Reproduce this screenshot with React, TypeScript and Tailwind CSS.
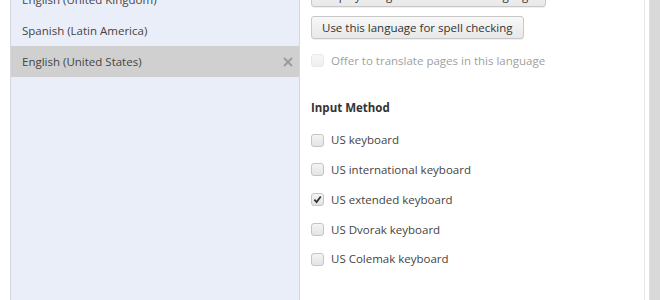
const LANGUAGES = [
  { name: "English (United Kingdom)", selected: false },
  { name: "Spanish (Latin America)", selected: false },
  { name: "English (United States)", selected: true },
];

const INPUT_METHODS = [
  { label: "US keyboard", checked: false },
  { label: "US international keyboard", checked: false },
  { label: "US extended keyboard", checked: true },
  { label: "US Dvorak keyboard", checked: false },
  { label: "US Colemak keyboard", checked: false },
];

function Checkbox({ checked, disabled }: { checked?: boolean; disabled?: boolean }) {
  return (
    <span
      className={[
        "flex h-[13px] w-[13px] shrink-0 items-center justify-center rounded-[3px] border bg-gradient-to-b from-[#f4f4f4] to-[#e4e4e4]",
        disabled ? "border-[#dcdcdc] opacity-60" : "border-[#c4c4c4]",
      ].join(" ")}
    >
      {checked && (
        <svg width="9" height="9" viewBox="0 0 10 10">
          <path d="M1.5 5.2 L4 7.8 L8.6 1.6" fill="none" stroke="#333" strokeWidth="2" />
        </svg>
      )}
    </span>
  );
}

export default function App() {
  return (
    <div
      className="flex h-[300px] w-[660px] overflow-hidden bg-white text-[11.5px] text-[#333]"
      style={{ fontFamily: '"Open Sans", "Noto Sans", sans-serif' }}
    >
      {/* language list */}
      <div className="ml-[10px] flex w-[290px] shrink-0 flex-col border-x border-[#d6d8de] bg-[#eaeef9]">
        <div className="-mt-[16px] flex flex-col">
          {LANGUAGES.map((lang) => (
            <div
              key={lang.name}
              className={[
                "flex h-[31px] items-center justify-between pl-[11px] pr-[6px]",
                lang.selected ? "bg-[#d0d0d0]" : "",
              ].join(" ")}
            >
              <span className="text-[#444]">{lang.name}</span>
              {lang.selected && (
                <svg width="10" height="10" viewBox="0 0 10 10">
                  <path d="M1 1 L9 9 M9 1 L1 9" stroke="#9a9a9a" strokeWidth="1.8" />
                </svg>
              )}
            </div>
          ))}
        </div>
      </div>

      {/* language details */}
      <div className="flex flex-1 flex-col pl-[11px]">
        <div className="-mt-[16px] flex flex-col items-start gap-[9px]">
          <button className="h-[23px] rounded-[3px] border border-[#c8c8c8] bg-gradient-to-b from-[#f8f8f8] to-[#e8e8e8] px-[10px] text-[#333] shadow-[0_1px_0_rgba(0,0,0,0.06)]">
            Display Google Chrome in this language
          </button>
          <button className="h-[23px] rounded-[3px] border border-[#c8c8c8] bg-gradient-to-b from-[#f8f8f8] to-[#e8e8e8] px-[10px] text-[#333] shadow-[0_1px_0_rgba(0,0,0,0.06)]">
            Use this language for spell checking
          </button>
        </div>

        <label className="mt-[13px] flex items-center gap-[7px] text-[#a0a0a0]">
          <Checkbox disabled />
          Offer to translate pages in this language
        </label>

        <h3 className="mt-[30px] font-bold text-[#333]">Input Method</h3>

        <div className="mt-[15px] flex flex-col gap-[12.75px]">
          {INPUT_METHODS.map((m) => (
            <label key={m.label} className="flex h-[17px] items-center gap-[7px] text-[#444]">
              <Checkbox checked={m.checked} />
              {m.label}
            </label>
          ))}
        </div>
      </div>

      {/* scrollbar */}
      <div className="flex shrink-0">
        <div className="w-px bg-[#e6e6e6]" />
        <div className="w-[4px] bg-white" />
        <div className="w-px bg-[#e0e0e0]" />
        <div className="w-[10px] bg-[#d9d9d9]" />
      </div>
    </div>
  );
}
